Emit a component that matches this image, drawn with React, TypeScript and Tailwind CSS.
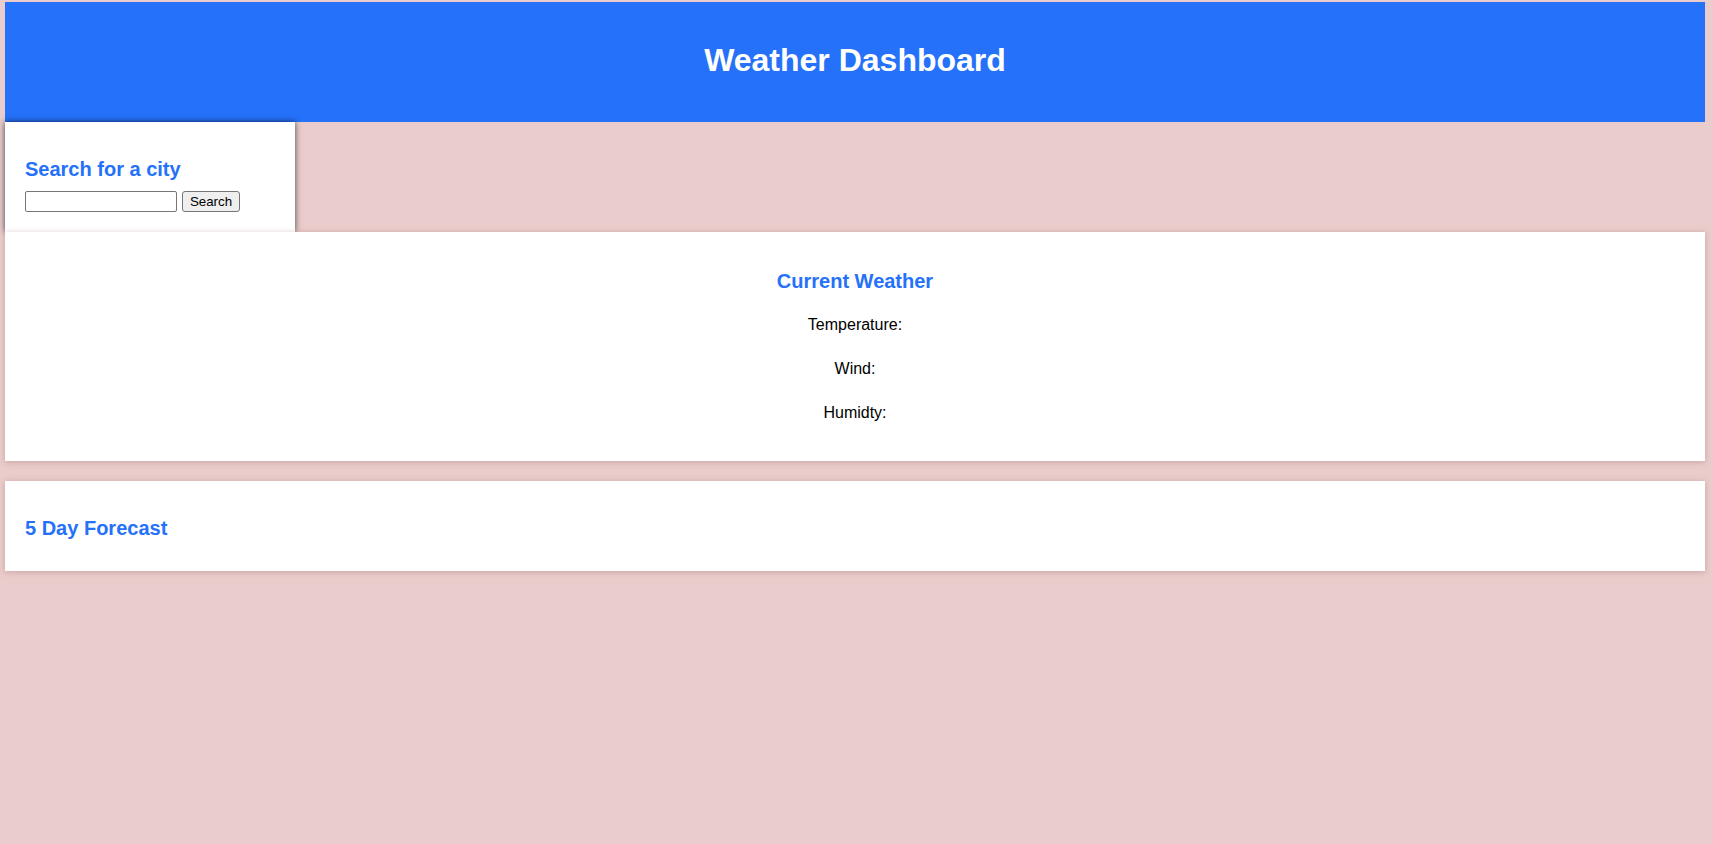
import { useState } from 'react'

export default function App() {
  const [city, setCity] = useState('')

  return (
    <div className="min-h-[844px] w-full bg-[#e9cccb] pt-[2px] pl-[5px] font-['Liberation_Sans',Arial,sans-serif] text-black">
      <div className="w-[1700px]">
        <header className="h-[120px] bg-[#2571fa] pt-[40px]">
          <h1 className="text-center text-[32px] font-bold leading-[37px] text-white">Weather Dashboard</h1>
        </header>

        {/* search */}
        <div className="w-[290px] bg-white px-5 pt-9 pb-5 shadow-[0_0_6px_rgba(0,0,0,0.7)]">
          <h3 className="text-[20px] font-bold leading-[23px] text-[#2571fa]">Search for a city</h3>
          <div className="mt-[10px] flex items-center gap-[5px]">
            <input
              value={city}
              onChange={(e) => setCity(e.target.value)}
              className="h-[21px] w-[152px] rounded-[2px] border border-[#767676] bg-white px-1 text-[13px]"
            />
            <button className="h-[21px] w-[58px] rounded-[3px] border border-[#767676] bg-[#efefef] text-[13.33px] leading-none">
              Search
            </button>
          </div>
        </div>

        {/* current */}
        <section className="bg-white pt-[38px] pb-[39px] text-center shadow-[0_1px_6px_rgba(150,90,90,0.35)]">
          <h3 className="text-[20px] font-bold leading-[23px] text-[#2571fa]">Current Weather</h3>
          <p className="mt-[23px] text-[16px] leading-[18px]">Temperature:</p>
          <p className="mt-[26px] text-[16px] leading-[18px]">Wind:</p>
          <p className="mt-[26px] text-[16px] leading-[18px]">Humidty:</p>
        </section>

        {/* forecast */}
        <section className="mt-5 bg-white px-5 pt-[36px] pb-[31px] shadow-[0_1px_6px_rgba(150,90,90,0.35)]">
          <h3 className="text-[20px] font-bold leading-[23px] text-[#2571fa]">5 Day Forecast</h3>
        </section>
      </div>
    </div>
  )
}
